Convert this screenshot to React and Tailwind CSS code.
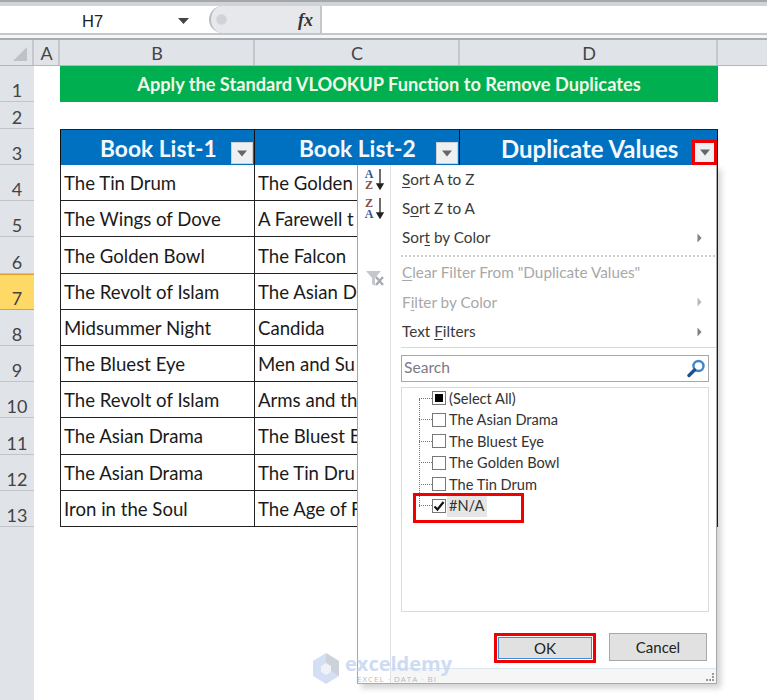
import React from "react";

const font = { fontFamily: '"Lato", "Open Sans", sans-serif' };
const rows = [
  ["4", "The Tin Drum", "The Golden"],
  ["5", "The Wings of Dove", "A Farewell t"],
  ["6", "The Golden Bowl", "The Falcon"],
  ["7", "The Revolt of Islam", "The Asian D"],
  ["8", "Midsummer Night", "Candida"],
  ["9", "The Bluest Eye", "Men and Su"],
  ["10", "The Revolt of Islam", "Arms and th"],
  ["11", "The Asian Drama", "The Bluest E"],
  ["12", "The Asian Drama", "The Tin Dru"],
  ["13", "Iron in the Soul", "The Age of F"],
];

function RowHead({ label, h, active }) {
  return (
    <div className={`w-[34px] shrink-0 flex items-end justify-center pb-[1px] border-b text-[18px] leading-5 text-[#444] ${h} ${active ? "bg-[#ffd966] border-[#e0a030] border-y" : "bg-[#e0e3e8] border-[#c0c3c8]"}`}>
      {label}
    </div>
  );
}

function FilterBtn({ red }) {
  return (
    <div className={`shrink-0 flex items-center justify-center bg-[#eef0f2] ${red ? "w-[25px] h-[25px] border-[3px] border-[#f00000]" : "w-[22px] h-[22px] border border-[#d0d0d0]"}`}>
      <svg width="12" height="7" viewBox="0 0 12 7"><path d="M1 0.5h10L6 6.5z" fill="#666" /></svg>
    </div>
  );
}

function U({ children }) {
  return <span className="underline underline-offset-2 decoration-1">{children}</span>;
}

function MenuItem({ children, arrow, disabled, h = "h-[29.5px]" }) {
  return (
    <div className={`flex items-center justify-between pl-[11px] pr-[14px] text-[15.3px] ${h} ${disabled ? "text-[#a8a8a8]" : "text-[#3a3a3a]"}`}>
      <span>{children}</span>
      {arrow && <svg width="5" height="10" viewBox="0 0 5 10"><path d="M0.5 0.5L4.5 5L0.5 9.5z" fill={disabled ? "#b8b8b8" : "#808080"} /></svg>}
    </div>
  );
}

function SortIcon({ top, bottom }) {
  const color = (c) => (c === "A" ? "text-[#2f5597]" : "text-[#8a4b42]");
  return (
    <div className="flex items-center gap-[3px] h-[29px]">
      <div className="flex flex-col items-center text-[12px] leading-[11px] font-bold" style={{ fontFamily: '"Liberation Serif", serif' }}>
        <span className={color(top)}>{top}</span>
        <span className={color(bottom)}>{bottom}</span>
      </div>
      <svg width="8" height="21" viewBox="0 0 8 21"><path d="M4 0v18M1 15l3 5 3-5z" stroke="#222" strokeWidth="1.3" fill="#222" /></svg>
    </div>
  );
}

function ListItem({ label, state, active }) {
  return (
    <div className="flex items-center h-[21.5px] pl-[17px]">
      <div className="w-[13px] border-t border-dotted border-[#777]" />
      <div className="w-[14px] h-[14px] shrink-0 border border-[#777] bg-white flex items-center justify-center">
        {state === "mixed" && <div className="w-[8px] h-[8px] bg-black" />}
        {state === "check" && (
          <svg width="12" height="12" viewBox="0 0 12 12"><path d="M1.5 6.5L4.5 9.5L10.5 2" stroke="#111" strokeWidth="2.2" fill="none" /></svg>
        )}
      </div>
      <span className={`ml-[1px] px-[2px] text-[14.6px] leading-[21.5px] text-[#333] ${active ? "bg-[#e6e6e6] w-[40px]" : ""}`}>{label}</span>
    </div>
  );
}

export default function App() {
  return (
    <div className="relative w-[767px] h-[700px] overflow-hidden bg-white" style={font}>
      {/* top strip */}
      <div className="h-[6px] bg-[#d0d3d7] border-t-2 border-[#a4a8ac]" />
      {/* formula bar */}
      <div className="flex h-[29px] bg-white border-b-2 border-[#c4c6ca]">
        <div className="w-[205px] flex items-center relative pt-[3px]">
          <span className="ml-[82px] text-[16.5px] text-[#222]" style={{ fontFamily: '"Liberation Sans", sans-serif' }}>H7</span>
          <svg className="ml-[75px]" width="11" height="6" viewBox="0 0 11 6"><path d="M0 0h11L5.5 6z" fill="#444" /></svg>
        </div>
        <div className="ml-[4px] w-[113px] flex items-center justify-between bg-[#e6e8ec] rounded-l-full border-l-2 border-[#b8bbc0] pl-[5px] pr-[7px] border-r-2 border-r-[#c4c6ca]">
          <div className="w-[11px] h-[11px] rounded-full bg-[#cfd2d6] border border-[#d8dade]" />
          <span className="text-[18px] leading-none font-bold italic text-[#333]" style={{ fontFamily: '"Liberation Serif", serif' }}>fx</span>
        </div>
        <div className="flex-1" />
      </div>
      <div className="h-[5px] bg-[#f4f5f6] border-b-2 border-[#a8abb0]" />
      {/* column headers */}
      <div className="flex h-[26px] bg-[#e0e3e8] border-b border-[#b4b7bc] text-[18px] text-[#444]">
        <div className="w-[34px] border-r-2 border-[#c4c7cc] flex items-end justify-end pr-[5px] pb-[4px]">
          <svg width="14" height="14" viewBox="0 0 14 14"><path d="M14 0V14H0z" fill="#bfc2c6" /></svg>
        </div>
        <div className="w-[26px] border-r-2 border-[#c4c7cc] flex items-center justify-center pl-[1px] pt-[1px]">A</div>
        <div className="w-[195px] border-r-2 border-[#c4c7cc] flex items-center justify-center pl-[1px] pt-[1px]">B</div>
        <div className="w-[205px] border-r-2 border-[#c4c7cc] flex items-center justify-center pl-[1px] pt-[1px]">C</div>
        <div className="w-[258px] border-r-2 border-[#c4c7cc] flex items-center justify-center pl-[2px] pt-[1px]">D</div>
        <div className="flex-1" />
      </div>

      {/* row 1 */}
      <div className="flex h-[36px]">
        <RowHead label="1" h="h-[36px]" />
        <div className="w-[26px]" />
        <div className="w-[658px] bg-[#00b050] flex items-center justify-center text-[18.2px] font-bold text-[#f2f8e8] pt-[1px]">
          Apply the Standard VLOOKUP Function to Remove Duplicates
        </div>
      </div>
      {/* row 2 */}
      <div className="flex h-[27px]">
        <RowHead label="2" h="h-[27px]" />
      </div>
      {/* row 3 */}
      <div className="flex h-[36px]">
        <RowHead label="3" h="h-[36px]" />
        <div className="w-[26px]" />
        <div className="w-[658px] flex bg-[#0070c0] border-t border-[#222] font-bold text-[#f4f8fc]">
          <div className="w-[195px] flex items-end justify-between pl-[39px] pr-[1px] pb-[1px] border-l border-r border-[#111] text-[22.8px] leading-[31px]">
            <span>Book List-1</span><FilterBtn />
          </div>
          <div className="w-[205px] flex items-end justify-between pl-[44px] pr-[1px] pb-[1px] border-r border-[#111] text-[22.8px] leading-[31px]">
            <span>Book List-2</span><FilterBtn />
          </div>
          <div className="w-[258px] flex items-end justify-between pl-[41px] border-r border-[#111] text-[24px] leading-[32px]">
            <span>Duplicate Values</span><FilterBtn red />
          </div>
        </div>
      </div>
      {/* data rows */}
      {rows.map(([n, b, c]) => (
        <div key={n} className="flex h-[36.2px]">
          <RowHead label={n} h="h-[36.2px]" active={n === "7"} />
          <div className="w-[26px]" />
          <div className="w-[658px] flex border-b border-[#222] text-[18.6px] text-[#1a1a1a]">
            <div className="w-[195px] flex items-center pl-[3px] pt-[3px] border-l border-r border-[#222]">{b}</div>
            <div className="w-[205px] flex items-center pl-[3px] pt-[3px] border-r border-[#222]">{c}</div>
            <div className="w-[258px] border-r border-[#222]" />
          </div>
        </div>
      ))}
      {/* empty row header strip */}
      <div className="w-[34px] h-[180px] bg-[#e0e3e8]" />

      {/* filter dropdown */}
      <div className="absolute left-[357px] top-[165px] w-[360px] h-[519px] bg-white border-l border-r border-b border-[#a8a8a8] shadow-[4px_4px_6px_rgba(0,0,0,0.18)] flex">
        <div className="w-[33px] border-r border-[#dfe3e8] flex flex-col items-center pl-[1px]">
          <SortIcon top="A" bottom="Z" />
          <SortIcon top="Z" bottom="A" />
          <div className="h-[47px]" />
          <svg width="20" height="18" viewBox="0 0 20 18">
            <path d="M1 1h15L10 8v8l-3-2V8z" fill="#c4c7cc" />
            <path d="M11 7l7 8M18 7l-7 8" stroke="#a8acb2" strokeWidth="2.4" />
          </svg>
        </div>
        <div className="flex-1 flex flex-col">
          <div>
            <MenuItem h="h-[29px]"><U>S</U>ort A to Z</MenuItem>
            <MenuItem h="h-[29px]">S<U>o</U>rt Z to A</MenuItem>
            <MenuItem h="h-[29px]" arrow>Sor<U>t</U> by Color</MenuItem>
            <div className="ml-[10px] mr-[1px] mt-[3px] mb-[1px] border-t-2 border-dotted border-[#d0d0d0]" />
            <MenuItem disabled><U>C</U>lear Filter From "Duplicate Values"</MenuItem>
            <MenuItem disabled arrow>F<U>i</U>lter by Color</MenuItem>
            <MenuItem arrow><span>Text <U>F</U>ilters</span></MenuItem>
          </div>
          <div className="ml-[10px] border-t border-[#d8d8d8]" />
          <div className="mt-[7px] ml-[10px] w-[308px] h-[27px] border border-[#a8a8a8] flex items-center justify-between pl-[2px] pr-[2px] text-[15.6px] text-[#7a7a8a]">
            <span>Search</span>
            <svg width="19" height="19" viewBox="0 0 19 19">
              <circle cx="11.5" cy="7" r="5" fill="none" stroke="#3f86c8" strokeWidth="2.4" />
              <path d="M7.5 11L2 16.5" stroke="#1f4f8f" strokeWidth="3.4" strokeLinecap="round" />
            </svg>
          </div>
          <div className="relative mt-[5px] ml-[10px] w-[308px] h-[225px] border border-[#d8dce0]">
            <div className="absolute left-[17px] top-[11px] h-[108px] border-l border-dotted border-[#777]" />
            <ListItem label="(Select All)" state="mixed" />
            <ListItem label="The Asian Drama" />
            <ListItem label="The Bluest Eye" />
            <ListItem label="The Golden Bowl" />
            <ListItem label="The Tin Drum" />
            <ListItem label="#N/A" state="check" active />
          </div>
          <div className="mt-[21px] ml-[103px] flex items-start gap-[13px] text-[15px] text-[#222]">
            <div className="w-[102px] h-[30px] border-[3px] border-[#f00000] flex">
              <div className="flex-1 m-[1px] pt-[1px] bg-[#e1e1e1] border border-[#3a8fd8] flex items-center justify-center">OK</div>
            </div>
            <div className="w-[98px] h-[28px] pt-[2px] bg-[#e1e1e1] border border-[#a8a8a8] flex items-center justify-center">Cancel</div>
          </div>
          <div className="mt-[5px] border-t border-[#d8e6f0] flex-1 bg-[#f6f6f6]" />
        </div>
        <div className="absolute right-[2px] bottom-[2px] w-[8px] h-[8px] border-r-2 border-b-2 border-dotted border-[#999]" />
      </div>

      {/* red box around #N/A */}
      <div className="absolute left-[413px] top-[493px] w-[111px] h-[30px] border-[3px] border-[#f00000]" />

      {/* watermark */}
      <div className="absolute left-[312px] top-[653px] flex items-start gap-[5px] opacity-90 pointer-events-none">
        <svg width="28" height="31" viewBox="0 0 28 31">
          <path d="M14 0L27 8v15l-13 8L1 23V8z" fill="#cfdcf5" />
          <path d="M14 0L27 8v15L14 15z" fill="#c8cdd6" />
          <path d="M9 13l5-3 5 3v6l-5 3-5-3z" fill="#eef1f6" />
        </svg>
        <div className="flex flex-col">
          <span className="text-[20px] leading-[21px] font-bold text-[#c9d8f4]" style={{ fontFamily: '"Open Sans", sans-serif' }}>exceldemy</span>
          <span className="text-[8px] leading-[10px] tracking-[1px] text-[#b0b4ba] ml-[12px]" style={{ fontFamily: '"Open Sans", sans-serif' }}>EXCEL · DATA · BI</span>
        </div>
      </div>
    </div>
  );
}
